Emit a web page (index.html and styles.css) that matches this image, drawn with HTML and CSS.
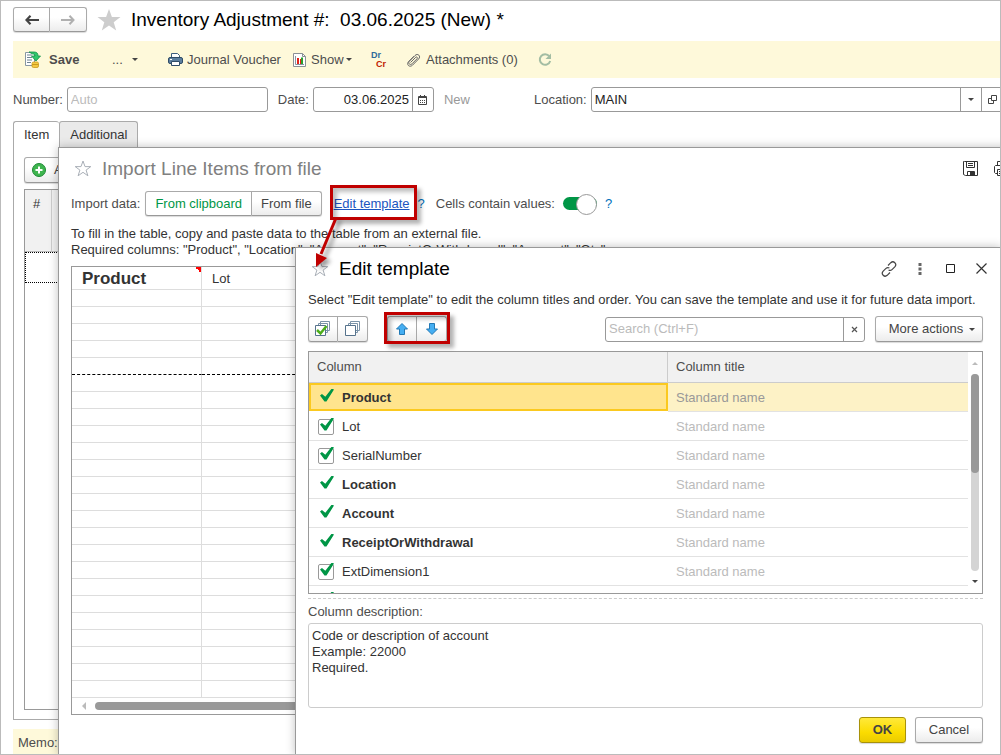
FILE: index.html
```
<!DOCTYPE html>
<html lang="en">
<head>
    <meta charset="UTF-8">
    <meta name="viewport" content="width=device-width, initial-scale=1.0">
    <title>Inventory Adjustment</title>
    <link rel="stylesheet" href="styles.css">
</head>
<body>
<div class="app">

    <!-- Document form -->
    <main class="document">
        <header class="doc-header">
            <div class="btn-group">
                <button class="btn nav-btn" aria-label="Back">
                    <svg width="14" height="10" viewBox="0 0 14 10"><path d="M5.5 0.8L1.5 5l4 4.2M2 5h12" fill="none" stroke="#444" stroke-width="2.2"/></svg>
                </button>
                <button class="btn nav-btn" aria-label="Forward">
                    <svg width="14" height="10" viewBox="0 0 14 10"><path d="M8.5 0.8L12.5 5l-4 4.2M12 5H0" fill="none" stroke="#b0b0b0" stroke-width="2"/></svg>
                </button>
            </div>
            <svg class="doc-star" width="24" height="22" viewBox="0 0 24 22"><path d="M12 0l2.9 8H23.500l-6.800 5.200L19.200 21.500 12 16.500 4.800 21.500 7.300 13.200.5 8h8.600z" fill="#cdcdcd"/></svg>
            <h1 class="doc-title">Inventory Adjustment #:&nbsp; 03.06.2025 (New) *</h1>
        </header>

        <div class="toolbar">
            <button class="tool save">
                <svg width="17" height="17" viewBox="0 0 17 17">
                    <path d="M1.500 1.500h9v13h-9z" fill="#fff" stroke="#8796a3"/>
                    <path d="M3 4h5M3 6.500h5M3 9h5M3 11.500h4" stroke="#6f8292"/>
                    <path d="M5 1h5c3 0 4 1.500 4 4h2.500L12 10 7.500 5H11c0-1.500-1-2-2.500-2z" fill="#2fc76b" stroke="#12914a" stroke-width=".8"/>
                    <rect x="8" y="11" width="6.500" height="5.500" rx="1.500" fill="#f4c842" stroke="#c99a1e" stroke-width=".8"/>
                    <path d="M8 13.500h6.500" stroke="#c99a1e"/>
                </svg>
                <span>Save</span>
            </button>
            <button class="tool more">... <i class="caret"></i></button>
            <button class="tool voucher">
                <svg width="15" height="15" viewBox="0 0 15 15">
                    <path d="M3.500 6V1.500h6l2 2V6" fill="#fff" stroke="#3d5d7c"/>
                    <rect x=".5" y="5.500" width="14" height="6" rx="1.500" fill="#5d7f9f" stroke="#2f4c68"/>
                    <path d="M3.500 9.500h8v4h-8z" fill="#fff" stroke="#2f4c68"/>
                    <path d="M2 7.500h2" stroke="#fff"/>
                </svg>
                <span>Journal Voucher</span>
            </button>
            <button class="tool show">
                <svg width="13" height="14" viewBox="0 0 13 14">
                    <path d="M.5.5h9l3 3v10H.5z" fill="#fff" stroke="#8a8f94"/>
                    <path d="M9.500.5v3h3" fill="none" stroke="#8a8f94"/>
                    <path d="M2.500 3v8.500h8.500" fill="none" stroke="#8796a3"/>
                    <path d="M4 5h2v6H4z" fill="#e2231a"/><path d="M7 6h1v5H7z" fill="#e2231a"/><path d="M8 4.500h2V11H8z" fill="#2ba02b"/>
                </svg>
                <span>Show</span><i class="caret"></i>
            </button>
            <button class="tool drcr" aria-label="Debit and credit"><span class="dr">Dr</span><span class="cr">Cr</span></button>
            <button class="tool attach">
                <svg width="14" height="14" viewBox="0 0 14 14"><path d="M3.500 9.500l5.200-5.200c1-1 2.400.4 1.400 1.400L5 10.800c-1.900 1.900-4.500-.7-2.600-2.600L8 2.500c2.800-2.800 6.300.8 3.600 3.500L5.500 12.200C2.400 15 -.9 11.500 1.500 8.700L7 3.200" fill="none" stroke="#666" stroke-width="1"/></svg>
                <span>Attachments (0)</span>
            </button>
            <button class="tool" aria-label="Refresh">
                <svg width="14" height="14" viewBox="0 0 14 14"><path d="M11.300 3.200A5.300 5.300 0 1 0 12.200 8" fill="none" stroke="#a3bda3" stroke-width="2"/><path d="M13 .5v5.500H7.500z" fill="#a3bda3"/></svg>
            </button>
        </div>

        <div class="fields">
            <label for="number">Number:</label>
            <div class="field number"><input id="number" type="text" placeholder="Auto"></div>
            <label for="date">Date:</label>
            <div class="field date">
                <input id="date" type="text" value="03.06.2025">
                <button aria-label="Choose date">
                    <svg width="9" height="10" viewBox="0 0 9 10"><path d="M.5 1.500h8v8h-8z" fill="none" stroke="#444"/><path d="M0 2.500h9M2.500 0v2M6.500 0v2" stroke="#444"/><path d="M2 5.500h5M2 7.500h5" stroke="#444" stroke-dasharray="1 1"/></svg>
                </button>
            </div>
            <span class="status">New</span>
            <label for="location">Location:</label>
            <div class="field location">
                <input id="location" type="text" value="MAIN">
                <button aria-label="Select location"><i class="caret"></i></button>
                <button aria-label="Open location">
                    <svg width="9" height="9" viewBox="0 0 9 9"><path d="M3.500.5h5v5h-5zM3 3.500H.5v5h5V6" fill="none" stroke="#444"/></svg>
                </button>
            </div>
        </div>

        <nav class="tabs">
            <button class="tab active">Item</button>
            <button class="tab">Additional</button>
        </nav>
        <section class="tab-panel">
            <button class="btn add-btn">
                <svg width="16" height="16" viewBox="0 0 16 16"><circle cx="8" cy="8" r="6.500" fill="#3fb54f" stroke="#1d8a35"/><path d="M8 4.500v7M4.500 8h7" stroke="#fff" stroke-width="2"/></svg>
                Add
            </button>
            <div class="items">
                <div class="items-head"><span class="items-num">#</span><span></span></div>
                <div class="items-row"></div>
            </div>
        </section>
        <footer class="memo">Memo:</footer>
    </main>

    <!-- Import window -->
    <section class="window import">
        <header class="window-head">
            <svg width="18" height="17" viewBox="0 0 18 17"><path d="M9 1l2 5.600h5.800l-4.700 3.500 1.800 5.700L9 12.300l-4.900 3.500 1.800-5.700L1.200 6.600H7z" fill="#fff" stroke="#aab0b8"/></svg>
            <h2>Import Line Items from file</h2>
            <button class="icon-btn" aria-label="Save to file">
                <svg width="16" height="15" viewBox="0 0 16 15"><path d="M1.500.5h13v14H2.500l-2-1V.5z" fill="none" stroke="#333"/><path d="M3.500.5v6h8v-6M5 2.500h5M5 4.500h5" fill="none" stroke="#333"/><path d="M4.500 14.500v-4h7v4" fill="none" stroke="#333"/><path d="M7 11h4v3H7z" fill="#333"/></svg>
            </button>
            <button class="icon-btn" aria-label="Print">
                <svg width="16" height="15" viewBox="0 0 16 15"><path d="M3.500 12.500h-2l-1-1v-6l1-1h13l1 1v6l-1 1h-2M3.500 4V.5h9V4" fill="none" stroke="#333"/><path d="M3.500 8.500h9v6h-9zM5 10.500h6M5 12.500h6" fill="none" stroke="#333"/></svg>
            </button>
        </header>

        <div class="import-options">
            <span class="caption">Import data:</span>
            <div class="btn-group">
                <button class="btn source selected">From clipboard</button>
                <button class="btn source">From file</button>
            </div>
            <a class="template-link" href="#">Edit template</a>
            <a class="help" href="#">?</a>
            <label class="switch">
                <span>Cells contain values:</span>
                <input type="checkbox" checked>
            </label>
            <a class="help" href="#">?</a>
        </div>

        <p class="hint">To fill in the table, copy and paste data to the table from an external file.<br>
        Required columns: "Product", "Location", "Account", "ReceiptOrWithdrawal", "Account", "Qty".</p>

        <div class="sheet">
            <table class="sheet-table">
                <thead><tr><th class="sheet-product">Product</th><th class="sheet-lot">Lot</th></tr></thead>
                <tbody id="sheetRows"></tbody>
            </table>
            <div class="hscroll"><i class="arrow-left"></i><span class="hthumb"></span></div>
        </div>
    </section>

    <!-- Template window -->
    <section class="window template">
        <header class="window-head">
            <svg width="18" height="17" viewBox="0 0 18 17"><path d="M9 1l2 5.600h5.800l-4.700 3.500 1.800 5.700L9 12.300l-4.900 3.500 1.800-5.700L1.200 6.600H7z" fill="#fff" stroke="#aab0b8"/></svg>
            <h2>Edit template</h2>
            <button class="icon-btn" aria-label="Copy link">
                <svg width="16" height="16" viewBox="0 0 16 16"><path d="M7 4.500l2.800-2.800c2.700-2.500 6.700 1.200 4 4.200L11 8.600c-1 1-2.400 1-3.400.4M9 11.500l-2.800 2.800c-2.700 2.500-6.700-1.200-4-4.200L5 7.400c1-1 2.400-1 3.400-.4" fill="none" stroke="#444" stroke-width="1.200"/></svg>
            </button>
            <button class="icon-btn" aria-label="More">
                <svg width="4" height="12" viewBox="0 0 4 12"><path d="M.5 0h3v3h-3zM.5 4.500h3v3h-3zM.5 9h3v3h-3z" fill="#666"/></svg>
            </button>
            <button class="icon-btn" aria-label="Maximize">
                <svg width="9" height="9" viewBox="0 0 9 9"><path d="M.5.5h8v8h-8z" fill="none" stroke="#222"/></svg>
            </button>
            <button class="icon-btn" aria-label="Close">
                <svg width="11" height="11" viewBox="0 0 11 11"><path d="M.5.5l10 10M10.500.5l-10 10" stroke="#333" stroke-width="1.200"/></svg>
            </button>
        </header>
        <p class="hint">Select "Edit template" to edit the column titles and order. You can save the template and use it for future data import.</p>

        <div class="commands">
            <div class="btn-group">
                <button class="btn tool-btn" aria-label="Check all">
                    <svg width="16" height="16" viewBox="0 0 16 16"><path d="M5.500.5h9v9h-9zM3.500 2.500h9v9h-9z" fill="#fff" stroke="#7b93a8"/><path d="M.5 4.500h10v10H.5z" fill="#fff" stroke="#55728c"/><path d="M2 9l3.500 3.500L11.500 5" fill="none" stroke="#4cae1b" stroke-width="2.500"/></svg>
                </button>
                <button class="btn tool-btn" aria-label="Uncheck all">
                    <svg width="16" height="16" viewBox="0 0 16 16"><path d="M5.500.5h9v9h-9zM3.500 2.500h9v9h-9z" fill="#fff" stroke="#7b93a8"/><path d="M.5 4.500h10v10H.5z" fill="#fff" stroke="#55728c"/></svg>
                </button>
            </div>
            <div class="btn-group">
                <button class="btn tool-btn" aria-label="Move up">
                    <svg width="12" height="12" viewBox="0 0 12 12"><path d="M6 .5L11.500 6H8.500v5.500h-5V6H.5z" fill="#45aef2" stroke="#2379b5"/></svg>
                </button>
                <button class="btn tool-btn" aria-label="Move down">
                    <svg width="12" height="12" viewBox="0 0 12 12"><path d="M6 11.500L.5 6h3V.5h5V6h3z" fill="#45aef2" stroke="#2379b5"/></svg>
                </button>
            </div>
            <div class="field search">
                <input type="text" placeholder="Search (Ctrl+F)" aria-label="Search">
                <button aria-label="Clear"><svg width="7" height="7" viewBox="0 0 7 7"><path d="M1 1l5 5M6 1L1 6" stroke="#555" stroke-width="1.200"/></svg></button>
            </div>
            <button class="btn more-actions">More actions <i class="caret"></i></button>
        </div>

        <div class="columns">
            <table class="columns-table">
                <thead><tr><th>Column</th><th>Column title</th></tr></thead>
                <tbody>
                    <tr class="current"><td><label class="required"><input type="checkbox" checked>Product</label></td><td>Standard name</td></tr>
                    <tr><td><label><input type="checkbox" checked>Lot</label></td><td>Standard name</td></tr>
                    <tr><td><label><input type="checkbox" checked>SerialNumber</label></td><td>Standard name</td></tr>
                    <tr><td><label class="required"><input type="checkbox" checked>Location</label></td><td>Standard name</td></tr>
                    <tr><td><label class="required"><input type="checkbox" checked>Account</label></td><td>Standard name</td></tr>
                    <tr><td><label class="required"><input type="checkbox" checked>ReceiptOrWithdrawal</label></td><td>Standard name</td></tr>
                    <tr><td><label><input type="checkbox" checked>ExtDimension1</label></td><td>Standard name</td></tr>
                    <tr><td><label><input type="checkbox" checked></label></td><td></td></tr>
                </tbody>
            </table>
            <div class="vscroll"><i class="arrow-up"></i><div class="vtrack"><div class="vthumb"></div></div><i class="caret"></i></div>
        </div>

        <label class="desc-label" for="description">Column description:</label>
        <textarea id="description" class="description" readonly>Code or description of account
Example: 22000
Required.</textarea>

        <footer class="window-foot">
            <button class="btn ok">OK</button>
            <button class="btn cancel">Cancel</button>
        </footer>

        <!-- Callout around the move buttons -->
        <div class="callout callout-move"></div>
    </section>

    <!-- Callout from the link to the window it opens -->
    <div class="callout callout-link"></div>
    <svg class="callout-arrow" width="40" height="60" viewBox="0 0 40 60">
        <path d="M27 6L12 42" stroke="#c00000" stroke-width="3"/>
        <path d="M7 55V41l11 5z" fill="#c00000"/>
    </svg>
</div>

<script>
    // Empty rows of the import sheet
    const rows = document.getElementById('sheetRows');
    for (let i = 0; i < 24; i++) {
        const tr = rows.insertRow();
        tr.insertCell();
        tr.insertCell();
        if (i === 4) tr.className = 'page-break';
    }
</script>
</body>
</html>
```
FILE: styles.css
```
* {
    box-sizing: border-box;
}

body {
    margin: 0;
    font-family: 'Liberation Sans', Arial, sans-serif;
    font-size: 13px;
    line-height: 16px;
    color: #333;
}

button, input, textarea {
    font: inherit;
    color: inherit;
    margin: 0;
}

button {
    padding: 0;
    border: none;
    background: none;
    white-space: nowrap;
}

h1, h2, p {
    margin: 0;
    font-weight: normal;
}

svg {
    display: block;
    flex: none;
}

.app {
    position: relative;
    height: 100vh;
    border: 1px solid #bbb;
    overflow: hidden;
    background: #fff;
}

/* Shared controls */
.btn {
    display: flex;
    align-items: center;
    justify-content: center;
    height: 26px;
    border: 1px solid #aaa;
    border-bottom-color: #999;
    border-radius: 3px;
    background: linear-gradient(#fff 40%, #ececec);
    box-shadow: 0 1px 1px rgba(0, 0, 0, 0.15);
    color: #444;
}

.btn-group {
    display: flex;
}

.btn-group .btn:first-child {
    border-radius: 3px 0 0 3px;
}

.btn-group .btn:last-child {
    border-left: none;
    border-radius: 0 3px 3px 0;
}

.caret {
    width: 0;
    height: 0;
    border: 3px solid transparent;
    border-top-color: #444;
    border-bottom: none;
}

.field {
    display: flex;
    height: 25px;
    border: 1px solid #999;
    border-radius: 3px;
    background: #fff;
}

.field input {
    flex: 1;
    min-width: 0;
    padding: 0 3px;
    border: none;
    outline: none;
    background: none;
}

.field input::placeholder {
    color: #bbb;
}

.field button {
    display: flex;
    align-items: center;
    justify-content: center;
    width: 21px;
    border-left: 1px solid #999;
}

/* Document form */
.document {
    display: flex;
    flex-direction: column;
    height: 100%;
    margin-right: -3px;
    padding: 6px 0 0 12px;
}

.doc-header {
    display: flex;
    align-items: center;
    height: 25px;
}

.nav-btn {
    width: 37px;
    height: 25px;
}

.doc-star {
    margin: 0 10px;
}

.doc-title {
    font-size: 19px;
    line-height: 24px;
    color: #000;
}

.toolbar {
    display: flex;
    align-items: center;
    height: 37px;
    margin-top: 9px;
    padding-left: 11px;
    background: #fef9da;
}

.tool {
    display: flex;
    align-items: center;
    gap: 5px;
    color: #4d4d4d;
}

.save {
    width: 88px;
    gap: 8px;
    font-weight: bold;
}

.more {
    width: 56px;
    gap: 9px;
}

.voucher {
    width: 125px;
    gap: 4px;
}

.show {
    width: 78px;
}

.show .caret {
    margin-left: -3px;
}

.drcr {
    display: grid;
    gap: 0;
    width: 36px;
    font-size: 9px;
    font-weight: bold;
    line-height: 9px;
    text-align: left;
}

.dr {
    color: #2f6a9a;
}

.cr {
    padding-left: 5px;
    color: #c01800;
}

.attach {
    width: 131px;
}

.fields {
    display: flex;
    align-items: center;
    margin-top: 9px;
    color: #4d4d4d;
}

.fields label {
    flex: none;
    margin-right: 4px;
}

.fields .field {
    color: #222;
}

.number {
    width: 201px;
    margin-right: 10px;
}

.date {
    width: 121px;
    margin-right: 10px;
}

.date input {
    text-align: right;
}

.status {
    width: 90px;
    color: #999;
}

.location {
    flex: 1;
}

.tabs {
    display: flex;
    margin-top: 9px;
}

.tab {
    height: 27px;
    padding: 0 10px;
    border: 1px solid #aaa;
    border-bottom: none;
    border-radius: 3px 3px 0 0;
    background: #eaeaea;
}

.tab.active {
    border-right: none;
    background: #fff;
}

.tab-panel {
    display: flex;
    flex-direction: column;
    flex: 1;
    padding: 9px 10px;
    border: 1px solid #aaa;
    border-top: none;
}

.add-btn {
    align-self: flex-start;
    gap: 7px;
    padding: 0 8px 0 6px;
}

.items {
    flex: 1;
    margin-top: 6px;
    border: 1px solid #999;
}

.items-head {
    display: grid;
    grid-template-columns: 27px 1fr;
    height: 62px;
    border-bottom: 1px solid #bbb;
    background: #f1f1f1;
}

.items-num {
    padding: 6px 8px;
    border-right: 1px solid #ccc;
}

.items-row {
    height: 31px;
    border: 1px dotted #000;
}

.memo {
    height: 25px;
    margin-top: 9px;
    padding: 6px 5px;
    background: #fef9da;
    color: #4d4d4d;
}

/* Windows */
.window {
    position: absolute;
    display: flex;
    flex-direction: column;
    padding: 0 12px;
    border: 1px solid #999;
    background: #fff;
    box-shadow: 0 0 9px rgba(0, 0, 0, 0.25);
}

.window-head {
    display: flex;
    align-items: center;
    height: 41px;
    padding-left: 3px;
}

.window-head h2 {
    flex: 1;
    margin-left: 10px;
    font-size: 19px;
    line-height: 24px;
}

.icon-btn {
    display: flex;
    align-items: center;
    justify-content: center;
    width: 31px;
    height: 24px;
}

.caption {
    color: #4d4d4d;
}

.import {
    top: 146px;
    right: -30px;
    bottom: -1px;
    left: 57px;
}

.import h2 {
    color: #808080;
}

.import-options {
    display: flex;
    align-items: center;
    margin-top: 2px;
}

.source {
    height: 25px;
    padding: 0 9px;
}

.import-options .btn-group {
    margin: 0 12px 0 5px;
}

.source.selected {
    background: #fff;
    color: #009646;
}

.template-link {
    color: #1b55c0;
}

.help {
    margin-left: 8px;
    color: #0070ba;
    text-decoration: none;
}

.switch {
    display: flex;
    align-items: center;
    gap: 8px;
    margin-left: 11px;
    color: #4d4d4d;
}

.switch input {
    position: relative;
    appearance: none;
    width: 34px;
    height: 13px;
    border-radius: 7px;
    background: #009646;
}

.switch input::after {
    content: '';
    position: absolute;
    top: -3px;
    right: 0;
    width: 19px;
    height: 19px;
    border: 1px solid #999;
    border-radius: 50%;
    background: #fff;
}

.import .hint {
    margin-top: 10px;
}

.sheet {
    display: flex;
    flex-direction: column;
    margin-top: 8px;
    border: 1px solid #999;
}

.sheet-table {
    width: 100%;
    border-collapse: separate;
    border-spacing: 0;
    table-layout: fixed;
}

.sheet-table th {
    height: 23px;
    padding: 1px 10px 0;
    border-bottom: 1px solid #ddd;
    font-weight: normal;
    text-align: left;
}

.sheet-table td {
    height: 17px;
    padding: 0;
    border-bottom: 1px solid #ddd;
}

.sheet-table th:first-child,
.sheet-table td:first-child {
    border-right: 1px solid #ddd;
}

.sheet-table .sheet-product {
    width: 130px;
    background: linear-gradient(to top right, transparent 50%, #f00 50%) top right / 6px 6px no-repeat;
    font-size: 17px;
    font-weight: bold;
}

.sheet-table .page-break td {
    border-bottom: 1px dashed #000;
}

.hscroll {
    display: flex;
    align-items: center;
    gap: 9px;
    height: 16px;
    padding-left: 10px;
}

.arrow-left {
    border: 4px solid transparent;
    border-right-color: #bbb;
    border-left: none;
}

.hthumb {
    flex: 1;
    height: 8px;
    border-radius: 4px;
    background: #999;
}

.template {
    top: 246px;
    right: -1px;
    bottom: -1px;
    left: 294px;
    padding-right: 17px;
    padding-bottom: 11px;
}

.template h2 {
    color: #000;
}

.template .window-head {
    margin-right: -14px;
}

.template .hint {
    margin-top: 3px;
}

.commands {
    display: flex;
    align-items: center;
    gap: 10px;
    margin-top: 8px;
}

.tool-btn {
    width: 30px;
}

.commands .btn-group + .btn-group {
    margin-left: 9px;
}

.search {
    width: 260px;
    margin-left: auto;
}

.more-actions {
    gap: 6px;
    width: 108px;
    padding-left: 6px;
}

.columns {
    display: flex;
    flex: 1;
    min-height: 0;
    margin-top: 9px;
    border: 1px solid #999;
    overflow: hidden;
}

.columns-table {
    flex: 1;
    border-collapse: separate;
    border-spacing: 0;
    table-layout: fixed;
    align-self: flex-start;
}

.columns-table th {
    height: 31px;
    padding: 0 8px;
    border-bottom: 1px solid #ccc;
    background: #f1f1f1;
    color: #4d4d4d;
    font-weight: normal;
    text-align: left;
}

.columns-table th:first-child {
    width: 359px;
    border-right: 1px solid #ccc;
}

.columns-table td {
    height: 29px;
    padding: 1px 8px 0;
    border-bottom: 1px solid #e2e2e2;
}

.columns-table td:first-child {
    padding-left: 9px;
}

.columns-table td:last-child {
    color: #bbb;
}

.columns-table label {
    display: flex;
    align-items: center;
    gap: 8px;
}

.columns-table input {
    position: relative;
    appearance: none;
    width: 16px;
    height: 16px;
    border: 1px solid #999;
    border-radius: 2px;
}

/* Tick reaches over the top right corner of the box */
.columns-table input:checked::after {
    content: '';
    position: absolute;
    top: -2px;
    left: 1px;
    width: 14px;
    height: 13px;
    background: #009646;
    clip-path: polygon(0 54%, 14% 42%, 38% 64%, 84% 0, 100% 8%, 46% 100%, 32% 100%);
}

.required {
    font-weight: bold;
}

.columns-table .required input {
    border-color: transparent;
}

.current td {
    background: #fdf2c6;
}

.columns-table .current td:first-child {
    border-bottom-color: #fff;
    background: #ffe48d;
    box-shadow: inset 0 0 0 2px #fbc91f;
}

.columns-table .current td:last-child {
    color: #999;
}

.vscroll {
    display: flex;
    flex-direction: column;
    align-items: center;
    gap: 9px;
    width: 14px;
    padding: 10px 0;
}

.arrow-up {
    border: 3px solid transparent;
    border-bottom-color: #bbb;
    border-top: none;
}

.vtrack {
    flex: 1;
    width: 8px;
    border-radius: 4px;
    background: #d4d4d4;
}

.vthumb {
    height: 50%;
    border-radius: 4px;
    background: #999;
}

.desc-label {
    margin-top: 4px;
    padding-top: 5px;
    border-top: 1px dashed #ccc;
    color: #4d4d4d;
}

.description {
    height: 85px;
    margin-top: 3px;
    padding: 4px 3px;
    border: 1px solid #ccc;
    border-radius: 3px;
    outline: none;
    resize: none;
}

.window-foot {
    display: flex;
    justify-content: flex-end;
    gap: 9px;
    margin-top: 9px;
}

.ok {
    width: 47px;
    border-color: #a8920a;
    background: linear-gradient(#ffe93a, #fbdc00 60%, #eacb00);
    font-weight: bold;
}

.cancel {
    width: 68px;
}

/* Callouts drawn over the form */
.callout {
    position: absolute;
    border: 3px solid #c00000;
    box-shadow: 4px 4px 4px rgba(0, 0, 0, 0.3), inset 4px 4px 4px rgba(0, 0, 0, 0.25);
    pointer-events: none;
}

.callout-link {
    top: 184px;
    left: 329px;
    width: 87px;
    height: 35px;
}

.callout-move {
    top: 64px;
    left: 88px;
    width: 66px;
    height: 32px;
}

.callout-arrow {
    position: absolute;
    top: 211px;
    left: 308px;
    filter: drop-shadow(4px 3px 2px rgba(0, 0, 0, 0.4));
    pointer-events: none;
}
```
